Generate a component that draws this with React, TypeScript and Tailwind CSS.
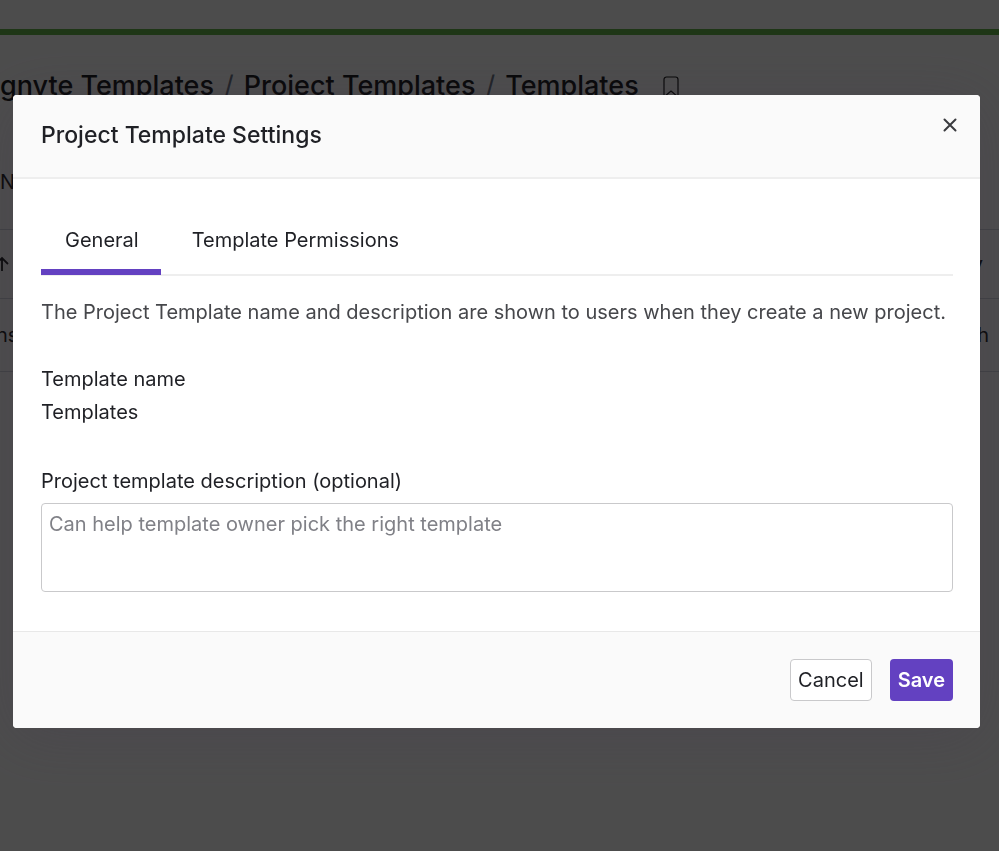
import { useState } from "react";

const TABS = ["General", "Template Permissions"];

function Page() {
  return (
    <div className="min-h-screen overflow-hidden bg-white text-[#17181a]">
      <div className="h-[35px] border-b-6 border-[#64b54a]" />

      <nav aria-label="Breadcrumb" className="flex h-[103px] items-center gap-[10px] text-[27px] font-medium whitespace-nowrap">
        <a href="#egnyte">gnyte Templates</a>
        <span className="font-normal text-gray-500">/</span>
        <a href="#projects">Project Templates</a>
        <span className="font-normal text-gray-500">/</span>
        <a href="#templates">Templates</a>
        <svg className="ml-3 h-6 w-5" viewBox="0 0 20 24" fill="none" stroke="currentColor" strokeWidth="1.2">
          <path d="M3 22V4.500a2.500 2.500 0 0 1 2.500-2.500h9a2.500 2.500 0 0 1 2.500 2.500v17.500l-7-6z" strokeLinejoin="round" />
        </svg>
      </nav>

      <div className="h-[91px] pt-[30px] text-xl">N</div>

      <div className="flex h-[69px] items-center justify-between border-t border-gray-300 pr-4 text-xl">
        <svg className="-ml-2 h-5 w-5" viewBox="0 0 20 20" fill="none" stroke="currentColor" strokeWidth="1.8">
          <path d="M10 17V4M4 10l6-6 6 6" />
        </svg>
        <span className="font-medium">y</span>
      </div>
      <div className="flex h-[74px] items-center justify-between border-y border-gray-300 pr-[10px] text-xl">
        <span className="-ml-1">ns</span>
        <span>h</span>
      </div>
    </div>
  );
}

export default function App() {
  const [tab, setTab] = useState(TABS[0]);
  const [description, setDescription] = useState("");

  return (
    <div className="font-['Inter',sans-serif]">
      <Page />

      <div className="fixed inset-0 overflow-y-auto bg-black/70 pt-[95px] pr-[19px] pl-[13px]">
        <div
          role="dialog"
          aria-modal="true"
          aria-labelledby="dialog-title"
          className="overflow-hidden rounded-sm bg-white text-xl text-[#1f2025] shadow-[0_8px_60px_rgba(68,58,78,0.3)]"
        >
          <header className="flex items-start justify-between border-b-2 border-[#eeeeee] bg-[#fafafa] pt-5 pr-[27px] pb-[26px] pl-7">
            <h1 id="dialog-title" className="pt-1 text-[23px] leading-8 font-medium">
              Project Template Settings
            </h1>
            <button type="button" aria-label="Close" className="-mr-[7px] flex h-5 w-5 items-center justify-center">
              <svg className="h-[14px] w-[14px]" viewBox="0 0 14 14" fill="none" stroke="#3a3b3f" strokeWidth="2">
                <path d="M1.500 1.500l11 11M12.500 1.500l-11 11" strokeLinecap="round" />
              </svg>
            </button>
          </header>

          <div className="pt-8 pr-[27px] pb-[39px] pl-7">
            <div role="tablist" className="flex gap-[7px] border-b-2 border-[#eeeeee]">
              {TABS.map((name) => (
                <button
                  key={name}
                  type="button"
                  role="tab"
                  aria-selected={tab === name}
                  onClick={() => setTab(name)}
                  className={`-mb-px border-b-6 pt-[15px] pr-[22px] pb-[15px] pl-6 ${
                    tab === name ? "border-[#6341c1]" : "border-transparent"
                  }`}
                >
                  {name}
                </button>
              ))}
            </div>

            <p className="pt-[22px] text-[#46474b]">
              The Project Template name and description are shown to users when they create a new project.
            </p>

            <dl className="mt-[39px] flex flex-col gap-[5px]">
              <dt>Template name</dt>
              <dd>Templates</dd>
            </dl>

            <label htmlFor="description" className="mt-[41px] block">
              Project template description (optional)
            </label>
            <textarea
              id="description"
              value={description}
              onChange={(e) => setDescription(e.target.value)}
              placeholder="Can help template owner pick the right template"
              className="mt-2 block h-[89px] w-full resize-none rounded border border-[#c9c9cb] px-[7px] py-[6px] placeholder:text-[#808187]"
            />
          </div>

          <footer className="flex justify-end gap-[18px] border-t border-[#e8e8e8] bg-[#fafafa] p-[27px]">
            <button type="button" className="h-[42px] rounded border border-[#c9c9cb] bg-white px-[7px]">
              Cancel
            </button>
            <button type="button" className="h-[42px] rounded bg-[#6341c1] px-2 font-semibold text-white">
              Save
            </button>
          </footer>
        </div>
      </div>
    </div>
  );
}
